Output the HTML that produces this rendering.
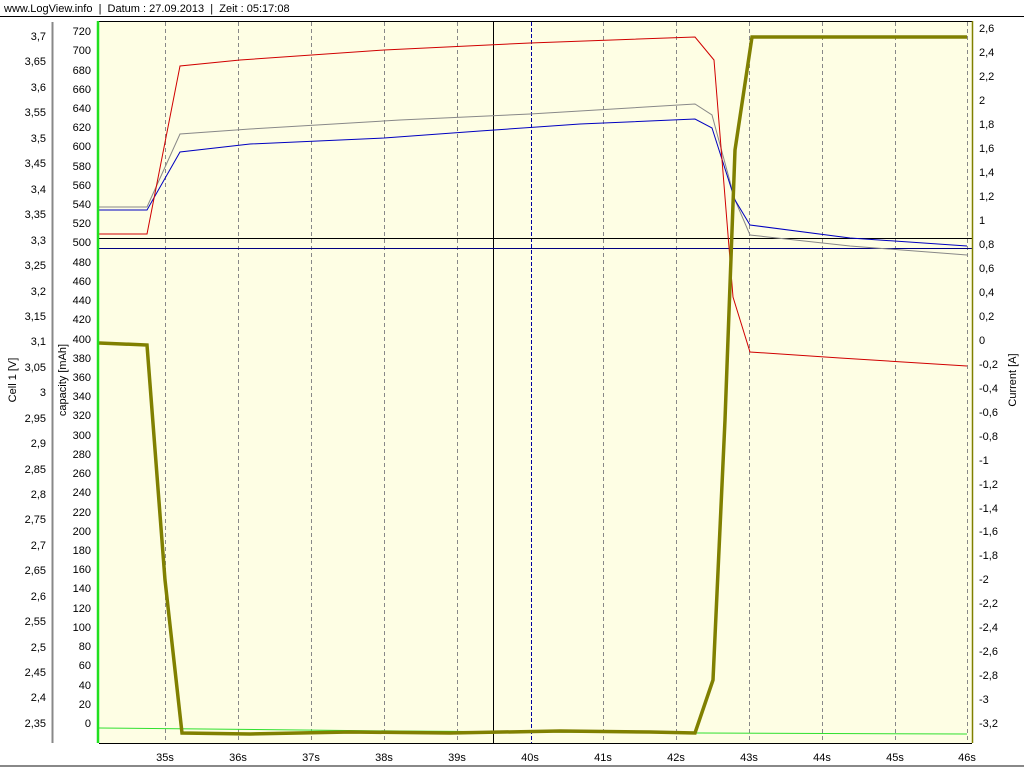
<!DOCTYPE html>
<html><head><meta charset="utf-8"><style>
html,body{margin:0;padding:0;background:#fff;width:1024px;height:768px;overflow:hidden}
svg{display:block;font-family:"Liberation Sans",sans-serif;font-size:11px}
</style></head><body>
<svg width="1024" height="768" viewBox="0 0 1024 768">
<rect width="1024" height="768" fill="#fff"/>
<text x="4" y="12" fill="#000">www.LogView.info &#160;| &#160;Datum : 27.09.2013 &#160;| &#160;Zeit : 05:17:08</text>
<line x1="0" y1="16.5" x2="1024" y2="16.5" stroke="#000"/>
<rect x="99" y="21" width="873" height="722" fill="#fefee4"/>
<line x1="99" y1="21.5" x2="972" y2="21.5" stroke="#000"/>
<line x1="99" y1="743.5" x2="972" y2="743.5" stroke="#000"/>
<g stroke="#888" stroke-dasharray="4,3">
<line x1="165.5" y1="22" x2="165.5" y2="743"/><line x1="238.5" y1="22" x2="238.5" y2="743"/><line x1="311.5" y1="22" x2="311.5" y2="743"/><line x1="384.5" y1="22" x2="384.5" y2="743"/><line x1="457.5" y1="22" x2="457.5" y2="743"/><line x1="603.5" y1="22" x2="603.5" y2="743"/><line x1="676.5" y1="22" x2="676.5" y2="743"/><line x1="749.5" y1="22" x2="749.5" y2="743"/><line x1="822.5" y1="22" x2="822.5" y2="743"/><line x1="895.5" y1="22" x2="895.5" y2="743"/><line x1="967.5" y1="22" x2="967.5" y2="743"/>
</g>
<line x1="531.5" y1="22" x2="531.5" y2="743" stroke="#0000a0" stroke-dasharray="4,2"/>
<line x1="493.5" y1="22" x2="493.5" y2="743" stroke="#000"/>
<line x1="99" y1="238.5" x2="972" y2="238.5" stroke="#000"/>
<line x1="99" y1="248.5" x2="972" y2="248.5" stroke="#000080"/>
<polyline fill="none" stroke="#30e030" points="99,728 400,731 700,733 967,734"/>
<polyline fill="none" stroke="#888" points="99,207 147,207 180,134 250,129 400,120 530,114 695,104 712,115 735,200 750,235 850,246 967,255"/>
<polyline fill="none" stroke="#0000c0" points="99,210 147,210 180,152 250,144 384,138 480,131 580,124 695,119 712,128 735,200 750,225 850,238 967,246"/>
<polyline fill="none" stroke="#d00000" points="99,234 147,234 180,66 240,60 384,50 530,43 695,37 714,60 733,297 750,352 840,358 967,366"/>
<polyline fill="none" stroke="#808000" stroke-width="3.5" points="99,343 147,345 165,580 182,733 250,734 350,732 450,733 560,731 650,732 695,733 713,680 725,420 735,150 752,37 820,37 860,37 967,37"/>
<line x1="98" y1="21" x2="98" y2="743" stroke="#20e020" stroke-width="2.5"/>
<line x1="972.5" y1="21" x2="972.5" y2="743" stroke="#808000" stroke-width="1.5"/>
<line x1="52.5" y1="22" x2="52.5" y2="743" stroke="#888" stroke-width="2"/>
<g fill="#000" text-anchor="end" dominant-baseline="middle">
<text x="46" y="37">3,7</text><text x="46" y="62">3,65</text><text x="46" y="88">3,6</text><text x="46" y="113">3,55</text><text x="46" y="139">3,5</text><text x="46" y="164">3,45</text><text x="46" y="190">3,4</text><text x="46" y="215">3,35</text><text x="46" y="241">3,3</text><text x="46" y="266">3,25</text><text x="46" y="292">3,2</text><text x="46" y="317">3,15</text><text x="46" y="342">3,1</text><text x="46" y="368">3,05</text><text x="46" y="393">3</text><text x="46" y="419">2,95</text><text x="46" y="444">2,9</text><text x="46" y="470">2,85</text><text x="46" y="495">2,8</text><text x="46" y="520">2,75</text><text x="46" y="546">2,7</text><text x="46" y="571">2,65</text><text x="46" y="597">2,6</text><text x="46" y="622">2,55</text><text x="46" y="648">2,5</text><text x="46" y="673">2,45</text><text x="46" y="698">2,4</text><text x="46" y="724">2,35</text>
<text x="91" y="32">720</text><text x="91" y="51">700</text><text x="91" y="71">680</text><text x="91" y="90">660</text><text x="91" y="109">640</text><text x="91" y="128">620</text><text x="91" y="147">600</text><text x="91" y="167">580</text><text x="91" y="186">560</text><text x="91" y="205">540</text><text x="91" y="224">520</text><text x="91" y="243">500</text><text x="91" y="263">480</text><text x="91" y="282">460</text><text x="91" y="301">440</text><text x="91" y="320">420</text><text x="91" y="340">400</text><text x="91" y="359">380</text><text x="91" y="378">360</text><text x="91" y="397">340</text><text x="91" y="416">320</text><text x="91" y="436">300</text><text x="91" y="455">280</text><text x="91" y="474">260</text><text x="91" y="493">240</text><text x="91" y="513">220</text><text x="91" y="532">200</text><text x="91" y="551">180</text><text x="91" y="570">160</text><text x="91" y="589">140</text><text x="91" y="609">120</text><text x="91" y="628">100</text><text x="91" y="647">80</text><text x="91" y="666">60</text><text x="91" y="686">40</text><text x="91" y="705">20</text><text x="91" y="724">0</text>
</g>
<g fill="#000" dominant-baseline="middle">
<text x="979" y="29">2,6</text><text x="979" y="53">2,4</text><text x="979" y="77">2,2</text><text x="979" y="101">2</text><text x="979" y="125">1,8</text><text x="979" y="149">1,6</text><text x="979" y="173">1,4</text><text x="979" y="197">1,2</text><text x="979" y="221">1</text><text x="979" y="245">0,8</text><text x="979" y="269">0,6</text><text x="979" y="293">0,4</text><text x="979" y="317">0,2</text><text x="979" y="341">0</text><text x="979" y="365">-0,2</text><text x="979" y="389">-0,4</text><text x="979" y="413">-0,6</text><text x="979" y="437">-0,8</text><text x="979" y="461">-1</text><text x="979" y="485">-1,2</text><text x="979" y="509">-1,4</text><text x="979" y="532">-1,6</text><text x="979" y="556">-1,8</text><text x="979" y="580">-2</text><text x="979" y="604">-2,2</text><text x="979" y="628">-2,4</text><text x="979" y="652">-2,6</text><text x="979" y="676">-2,8</text><text x="979" y="700">-3</text><text x="979" y="724">-3,2</text>
</g>
<g fill="#000" text-anchor="middle">
<text x="165" y="761">35s</text><text x="238" y="761">36s</text><text x="311" y="761">37s</text><text x="384" y="761">38s</text><text x="457" y="761">39s</text><text x="530" y="761">40s</text><text x="603" y="761">41s</text><text x="676" y="761">42s</text><text x="749" y="761">43s</text><text x="822" y="761">44s</text><text x="895" y="761">45s</text><text x="967" y="761">46s</text>
</g>
<text transform="translate(16,380) rotate(-90)" text-anchor="middle" fill="#000">Cell 1 [V]</text>
<text transform="translate(66,380) rotate(-90)" text-anchor="middle" fill="#000">capacity [mAh]</text>
<text transform="translate(1016,380) rotate(-90)" text-anchor="middle" fill="#000">Current [A]</text>
<line x1="0" y1="766" x2="1024" y2="766" stroke="#888" stroke-width="2"/>
</svg>
</body></html>
